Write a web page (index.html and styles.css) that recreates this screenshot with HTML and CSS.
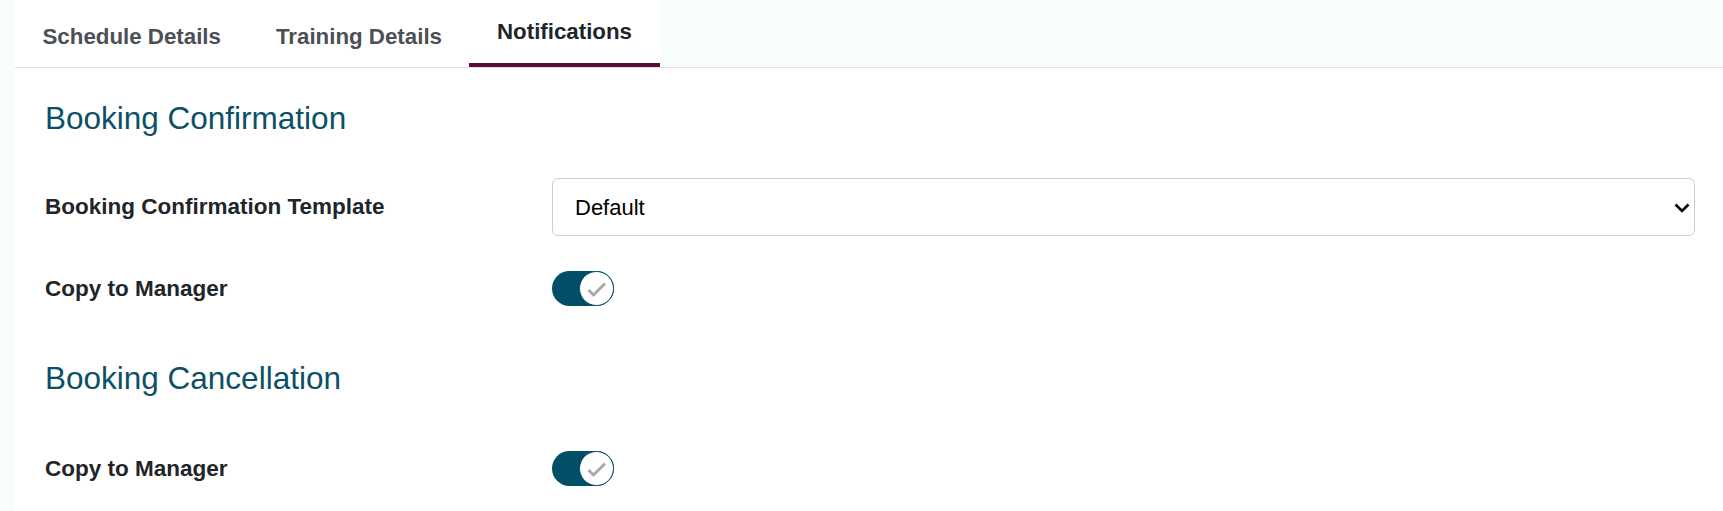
FILE: index.html
```html
<!DOCTYPE html>
<html lang="en">
<head>
<meta charset="utf-8">
<title>Notifications</title>
<link rel="stylesheet" href="styles.css">
</head>
<body>
<div class="panel">
  <div class="tabbar">
    <ul class="tabs">
      <li class="tab">Schedule Details</li>
      <li class="tab">Training Details</li>
      <li class="tab active">Notifications</li>
    </ul>
  </div>
  <div class="content">
    <h2 class="section-title first">Booking Confirmation</h2>
    <div class="form-row select-row">
      <label class="label">Booking Confirmation Template</label>
      <div class="select-wrap">
        <select class="select">
          <option>Default</option>
        </select>
        <svg class="chevron" width="16" height="10" viewBox="0 0 16 10"><path d="M1.5 1.5 L8 8 L14.5 1.5" fill="none" stroke="#000" stroke-width="2.6"/></svg>
      </div>
    </div>
    <div class="form-row toggle-row">
      <label class="label">Copy to Manager</label>
      <div class="toggle">
        <span class="knob">
          <svg width="33" height="33" viewBox="0 0 33 33"><path d="M8.5 18 L13.5 23 L25 11.5" fill="none" stroke="#a9a9a9" stroke-width="3"/></svg>
        </span>
      </div>
    </div>
    <h2 class="section-title second">Booking Cancellation</h2>
    <div class="form-row toggle-row last">
      <label class="label">Copy to Manager</label>
      <div class="toggle">
        <span class="knob">
          <svg width="33" height="33" viewBox="0 0 33 33"><path d="M8.5 18 L13.5 23 L25 11.5" fill="none" stroke="#a9a9a9" stroke-width="3"/></svg>
        </span>
      </div>
    </div>
  </div>
</div>
</body>
</html>
```
FILE: styles.css
```css
html, body {
  margin: 0;
  padding: 0;
}
body {
  background: #f7fcfd;
  font-family: "Liberation Sans", Arial, sans-serif;
  color: #212529;
  height: 511px;
  overflow: hidden;
}
.panel {
  margin-left: 15px;
  background: #ffffff;
  min-height: 511px;
}
.tabbar {
  background: #f7fcfd;
  border-bottom: 1px solid #dee2e6;
  height: 67px;
}
.tabs {
  list-style: none;
  margin: 0;
  padding: 0;
  display: flex;
  width: max-content;
  background: #ffffff;
  height: 67px;
}
.tab {
  box-sizing: border-box;
  height: 67px;
  display: flex;
  align-items: center;
  padding: 6px 27.5px 0 27.5px;
  font-size: 22.3px;
  line-height: 26px;
  font-weight: bold;
  color: #4b5056;
}
.tab.active {
  padding: 0 27.5px 0 27.5px;
  color: #212529;
  border-bottom: 4px solid #5b0b3b;
}
.content {
  padding: 31px 28px 0 30px;
}
.section-title {
  margin: 0;
  font-size: 31.5px;
  line-height: 38px;
  font-weight: normal;
  color: #0b5067;
}
.section-title.second {
  margin-top: 53px;
}
.form-row {
  display: grid;
  grid-template-columns: 507px 1fr;
  align-items: center;
}
.select-row {
  margin-top: 41px;
}
.toggle-row {
  margin-top: 35px;
}
.toggle-row.last {
  margin-top: 54px;
}
.label {
  font-size: 22.5px;
  line-height: 26px;
  font-weight: bold;
  color: #212529;
}
.select-wrap {
  position: relative;
}
.select {
  appearance: none;
  -webkit-appearance: none;
  width: 100%;
  height: 58px;
  box-sizing: border-box;
  border: 1px solid #cfcfcf;
  border-radius: 6px;
  background: #ffffff;
  padding: 0 40px 0 22px;
  font-family: "Liberation Sans", Arial, sans-serif;
  font-size: 22px;
  color: #000000;
}
.chevron {
  position: absolute;
  right: 5px;
  top: 25px;
  pointer-events: none;
}
.toggle {
  width: 62px;
  height: 35px;
  border-radius: 18px;
  background: #004f66;
  display: flex;
  justify-content: flex-end;
}
.knob {
  width: 35px;
  height: 35px;
  box-sizing: border-box;
  border-radius: 50%;
  background: #ffffff;
  border: 1.5px solid #004f66;
  display: flex;
  align-items: center;
  justify-content: center;
}
```
